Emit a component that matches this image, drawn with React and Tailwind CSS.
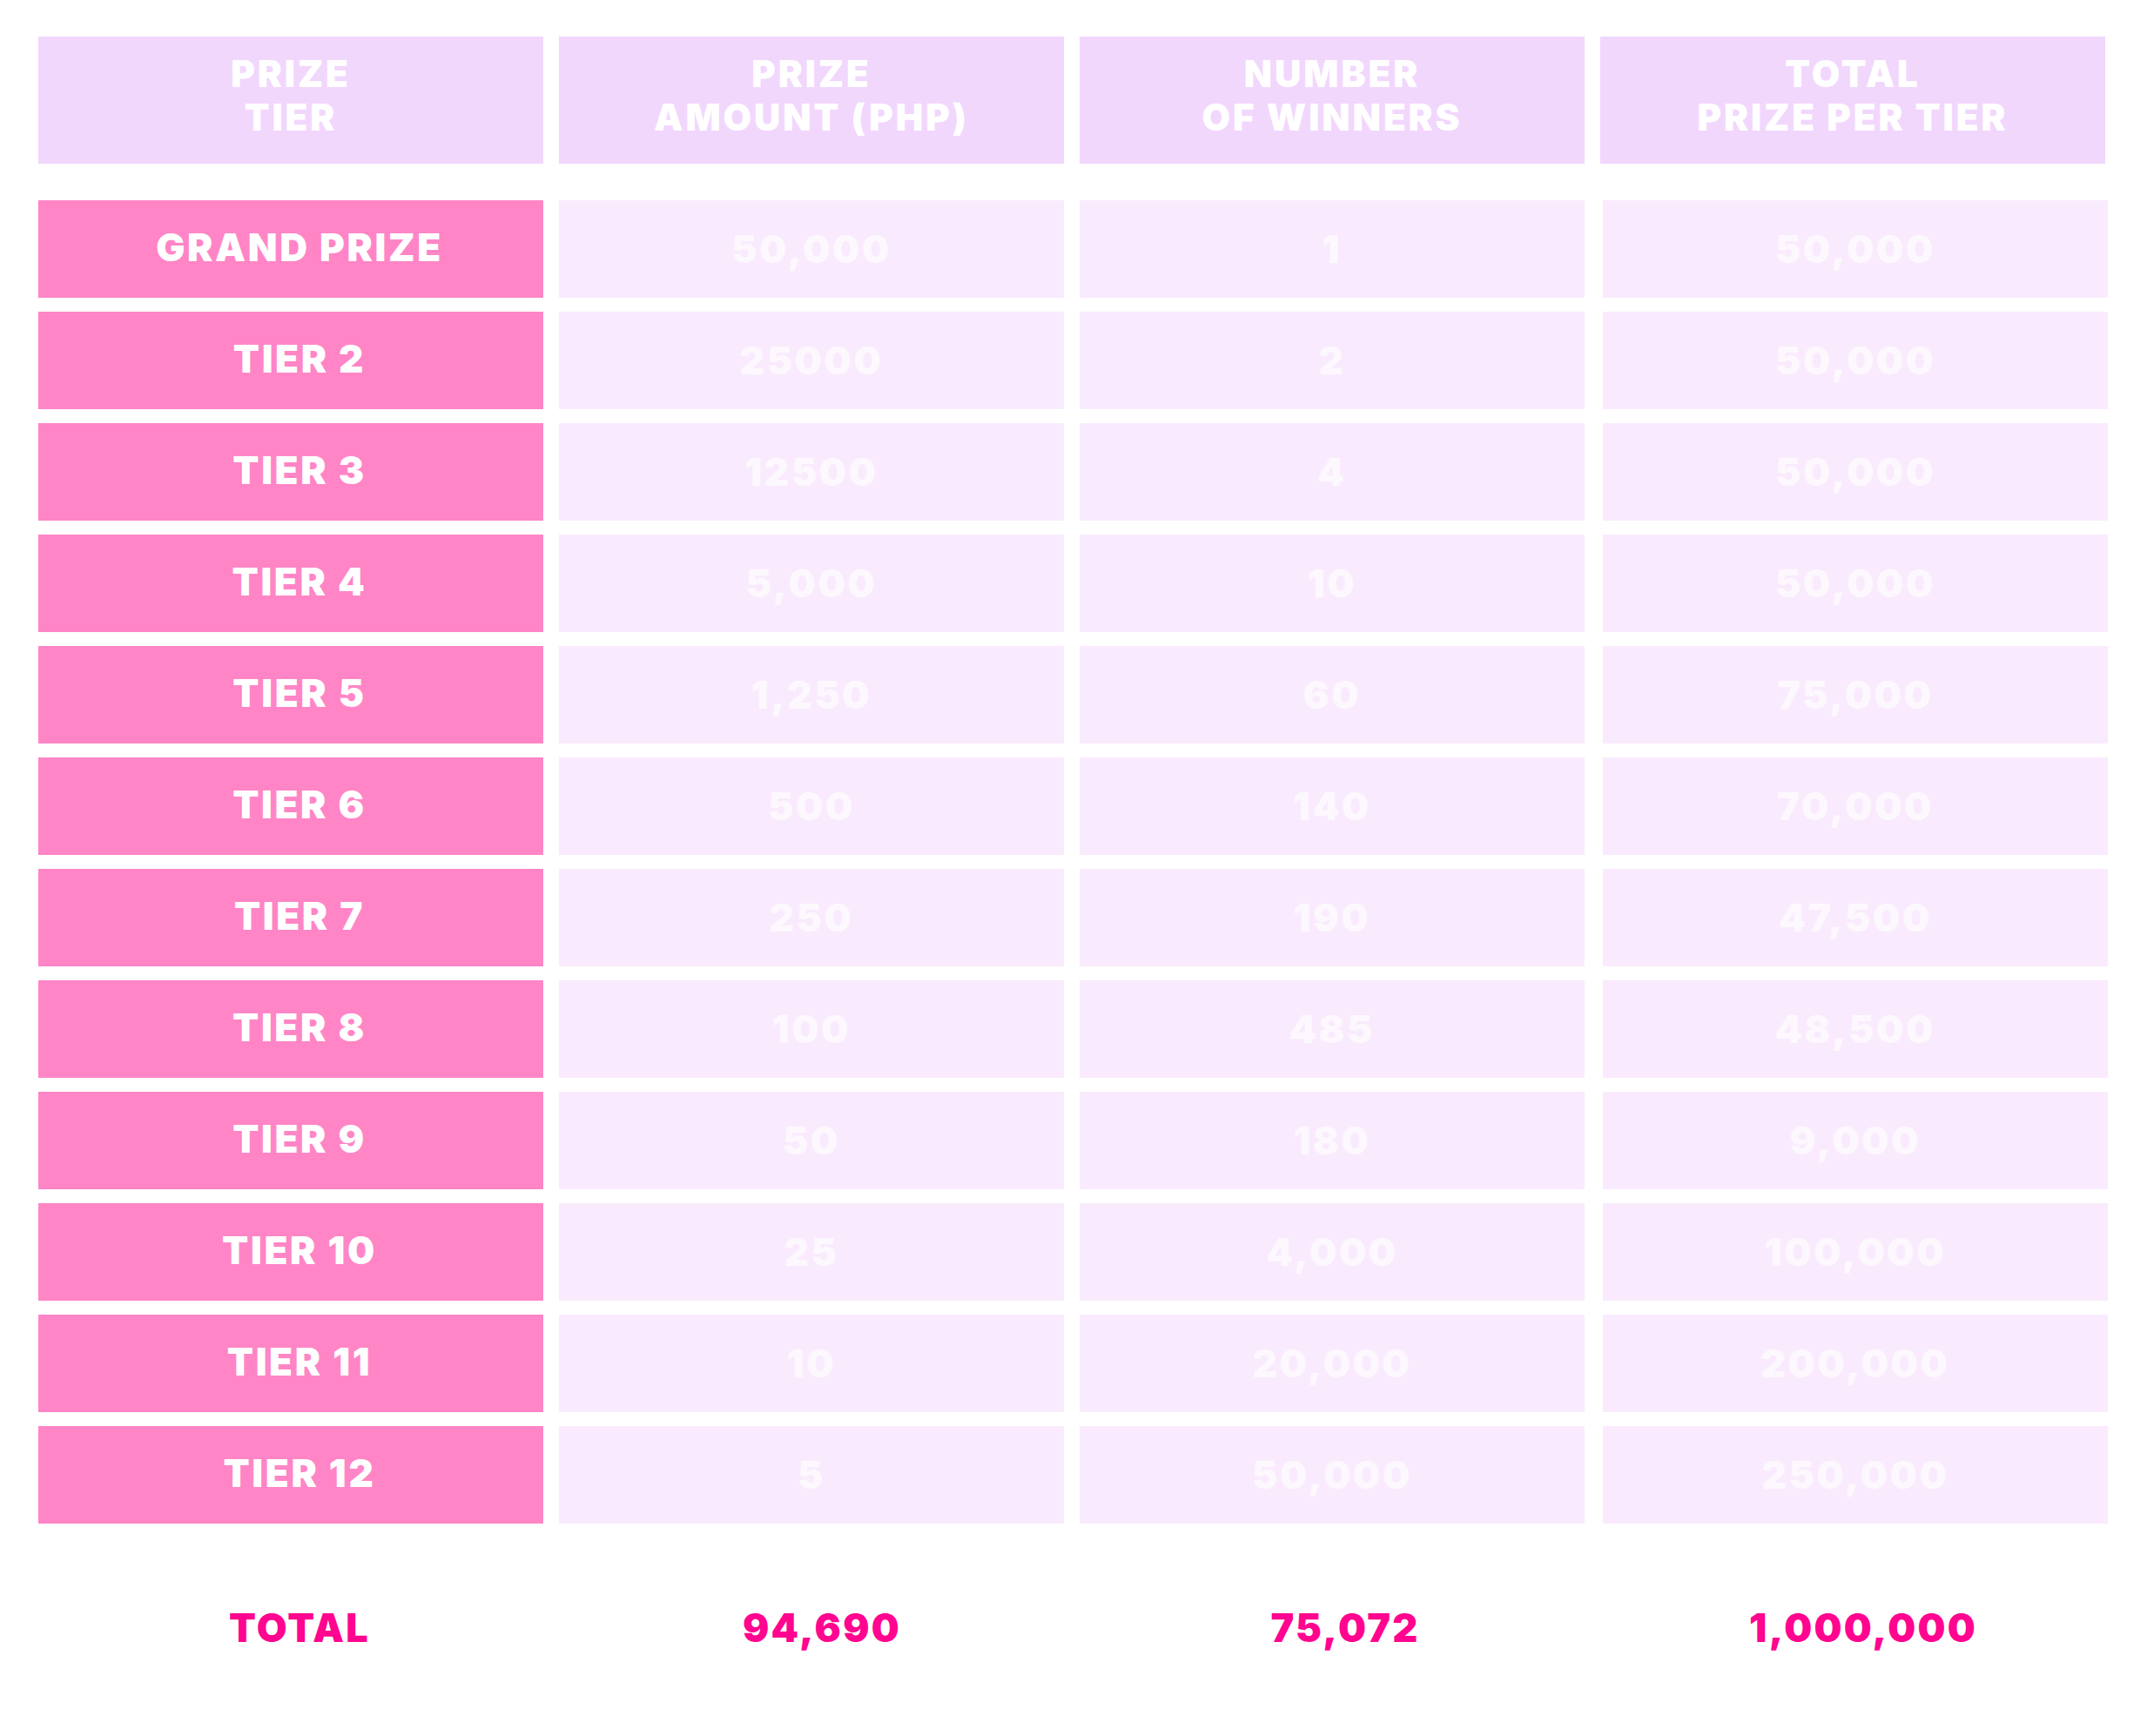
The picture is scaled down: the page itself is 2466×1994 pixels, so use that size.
import React from 'react';

const rows = [
  { tier: 'GRAND PRIZE', amount: '50,000', winners: '1', total: '50,000' },
  { tier: 'TIER 2', amount: '25000', winners: '2', total: '50,000' },
  { tier: 'TIER 3', amount: '12500', winners: '4', total: '50,000' },
  { tier: 'TIER 4', amount: '5,000', winners: '10', total: '50,000' },
  { tier: 'TIER 5', amount: '1,250', winners: '60', total: '75,000' },
  { tier: 'TIER 6', amount: '500', winners: '140', total: '70,000' },
  { tier: 'TIER 7', amount: '250', winners: '190', total: '47,500' },
  { tier: 'TIER 8', amount: '100', winners: '485', total: '48,500' },
  { tier: 'TIER 9', amount: '50', winners: '180', total: '9,000' },
  { tier: 'TIER 10', amount: '25', winners: '4,000', total: '100,000' },
  { tier: 'TIER 11', amount: '10', winners: '20,000', total: '200,000' },
  { tier: 'TIER 12', amount: '5', winners: '50,000', total: '250,000' },
];

const headers = [
  ['PRIZE', 'TIER'],
  ['PRIZE', 'AMOUNT (PHP)'],
  ['NUMBER', 'OF WINNERS'],
  ['TOTAL', 'PRIZE PER TIER'],
];

const font = { fontFamily: 'Inter, "Liberation Sans", sans-serif' };

export default function App() {
  return (
    <div className="w-[2466px] min-h-[1994px] bg-white pl-[44px] pr-[48px] pt-[42px]" style={font}>
      {/* header */}
      <div className="grid grid-cols-4 gap-x-[18px]">
        {headers.map((h, i) => (
          <div
            key={i}
            className="h-[146px] bg-[#f2d7fd] flex flex-col items-center justify-center pb-[10px] text-white font-black text-[42px] leading-[50px] tracking-[0.07em]"
          >
            <span>{h[0]}</span>
            <span>{h[1]}</span>
          </div>
        ))}
      </div>

      {/* body */}
      <div className="mt-[42px] flex flex-col gap-y-[16px]">
        {rows.map((r) => (
          <div key={r.tier} className="grid grid-cols-4 gap-x-[18px] h-[112px] font-black text-[44px] tracking-[0.06em]">
            <div className="bg-[#ff85c6] text-white flex items-center justify-center pl-[20px] pb-[4px]">{r.tier}</div>
            <div className="bg-[#f9ebfd] text-[#fdf8fe] flex items-center justify-center">{r.amount}</div>
            <div className="bg-[#f9ebfd] text-[#fdf8fe] flex items-center justify-center">{r.winners}</div>
            <div className="bg-[#f9ebfd] text-[#fdf8fe] flex items-center justify-center translate-x-[3px]">{r.total}</div>
          </div>
        ))}
      </div>

      {/* totals */}
      <div className="mt-[64px] grid grid-cols-4 gap-x-[18px] h-[112px] font-black text-[45px] tracking-[0.05em] text-[#ff0590]">
        <div className="flex items-center justify-center pl-[20px]">TOTAL</div>
        <div className="flex items-center justify-center pl-[24px]">94,690</div>
        <div className="flex items-center justify-center pl-[30px]">75,072</div>
        <div className="flex items-center justify-center pl-[24px]">1,000,000</div>
      </div>
    </div>
  );
}
